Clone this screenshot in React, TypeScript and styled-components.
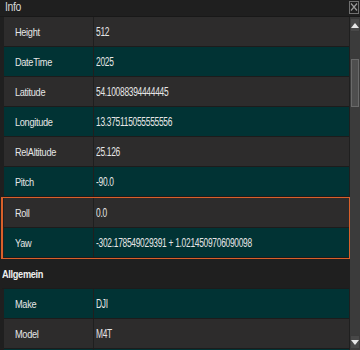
import React from "react";
import styled, { createGlobalStyle } from "styled-components";

const GlobalStyle = createGlobalStyle`
  body {
    margin: 0;
    background: #1f1f1f;
    font-family: "Liberation Sans", Arial, sans-serif;
  }
`;

type Row = { label: string; value: string };

const infoRows: Row[] = [
  { label: "Height", value: "512" },
  { label: "DateTime", value: "2025" },
  { label: "Latitude", value: "54.10088394444445" },
  { label: "Longitude", value: "13.375115055555556" },
  { label: "RelAltitude", value: "25.126" },
  { label: "Pitch", value: "-90.0" },
];

const selectedRows: Row[] = [
  { label: "Roll", value: "0.0" },
  { label: "Yaw", value: "-302.178549029391 + 1.0214509706090098" },
];

const generalRows: Row[] = [
  { label: "Make", value: "DJI" },
  { label: "Model", value: "M4T" },
  { label: "", value: "" },
];

const PropertyRow = ({ row, teal }: { row: Row; teal: boolean }) => (
  <PropRow $teal={teal}>
    <Label>
      <Text>{row.label}</Text>
    </Label>
    <Value>
      <Text $scale={0.7}>{row.value}</Text>
    </Value>
  </PropRow>
);

const App = () => {
  return (
    <Window>
      <GlobalStyle />
      <TitleBar>
        <Title>
          <Text>Info</Text>
        </Title>
        <CloseButton>
          <svg width="8" height="10" viewBox="0 0 8 10">
            <path d="M1 1.5 L7 8.5 M7 1.5 L1 8.5" stroke="#9a9a9a" strokeWidth="1.2" />
          </svg>
        </CloseButton>
      </TitleBar>
      <Body>
        <Content>
          {infoRows.map((row, i) => (
            <PropertyRow key={row.label} row={row} teal={i % 2 === 1} />
          ))}
          <Selected>
            {selectedRows.map((row, i) => (
              <PropertyRow key={row.label} row={row} teal={i % 2 === 1} />
            ))}
          </Selected>
          <SectionHeader>
            <Text>Allgemein</Text>
          </SectionHeader>
          {generalRows.map((row, i) => (
            <PropertyRow key={row.label || "empty"} row={row} teal={i % 2 === 0} />
          ))}
        </Content>
        <Scrollbar>
          <ArrowButton>
            <svg width="8" height="5" viewBox="0 0 8 5">
              <path d="M0 5 L4 0 L8 5 Z" fill="#e6e6e6" />
            </svg>
          </ArrowButton>
          <Track>
            <Thumb />
          </Track>
          <ArrowButton>
            <svg width="8" height="5" viewBox="0 0 8 5">
              <path d="M0 0 L4 5 L8 0 Z" fill="#e6e6e6" />
            </svg>
          </ArrowButton>
        </Scrollbar>
      </Body>
    </Window>
  );
};

export default App;

const Window = styled.div`
  width: 360px;
  height: 350px;
  display: flex;
  flex-direction: column;
  overflow: hidden;
  background: #1f1f1f;
  color: #e6e6e6;
  font-size: 11.5px;
  letter-spacing: -0.4px;
`;

const Text = styled.span<{ $scale?: number }>`
  display: inline-block;
  white-space: nowrap;
  transform: scaleX(${(p) => p.$scale ?? 0.8});
  transform-origin: left center;
`;

const TitleBar = styled.div`
  height: 16px;
  flex-shrink: 0;
  display: flex;
  align-items: center;
  justify-content: space-between;
  padding: 0 1px 0 5px;
  border-bottom: 1px solid #181818;
`;

const Title = styled.span`
  color: #d8d8d8;
  font-size: 13px;
  line-height: 14px;
  margin-top: -2px;
`;

const CloseButton = styled.div`
  width: 8px;
  height: 11px;
  border: 1px solid #707070;
  display: flex;
  align-items: center;
  justify-content: center;
  margin-top: -2px;
`;

const Body = styled.div`
  flex: 1;
  display: flex;
  min-height: 0;
`;

const Content = styled.div`
  flex: 1;
  display: flex;
  flex-direction: column;
  padding: 0 1px 0 4px;
  overflow: hidden;
`;

const PropRow = styled.div<{ $teal: boolean }>`
  height: 29px;
  flex-shrink: 0;
  display: flex;
  align-items: center;
  background: ${(p) => (p.$teal ? "#013334" : "#2d2c2c")};
  border-bottom: 1px solid #1c1c1c;
`;

const Label = styled.div`
  width: 78px;
  padding-left: 11px;
  align-self: stretch;
  display: flex;
  align-items: center;
  border-right: 1px solid #1f1f1f;
`;

const Value = styled.div`
  padding-left: 2px;
  font-size: 12px;
`;

const Selected = styled.div`
  display: flex;
  flex-direction: column;
  outline: 1px solid #d9602a;
  margin: 1px 0 1px -2px;
  padding-left: 1px;
  border-left: 1px solid #d9602a;
`;

const SectionHeader = styled.div`
  height: 29px;
  flex-shrink: 0;
  display: flex;
  align-items: center;
  margin-left: -2px;
  font-weight: bold;
  color: #f0f0f0;
  border-bottom: 1px solid #1c1c1c;
`;

const Scrollbar = styled.div`
  width: 10px;
  flex-shrink: 0;
  display: flex;
  flex-direction: column;
  background: #3b3b3b;
  padding-top: 1px;
`;

const ArrowButton = styled.div`
  height: 12px;
  flex-shrink: 0;
  display: flex;
  align-items: center;
  justify-content: center;
  background: #484848;
  border: 1px solid #3a3a3a;
  margin-bottom: 1px;
`;

const Track = styled.div`
  flex: 1;
  padding: 26px 1px 0;
`;

const Thumb = styled.div`
  height: 46px;
  background: #4e4e4e;
  border: 1px solid #6a6a6a;
`;
